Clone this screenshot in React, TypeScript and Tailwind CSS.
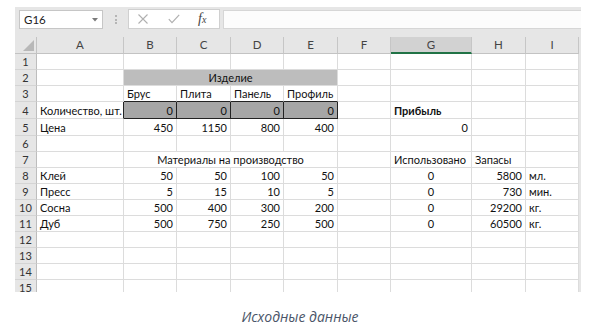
const cols = [
  { key: 'A', w: 'w-[87px]' },
  { key: 'B', w: 'w-[53px]' },
  { key: 'C', w: 'w-[54px]' },
  { key: 'D', w: 'w-[53px]' },
  { key: 'E', w: 'w-[54px]' },
  { key: 'F', w: 'w-[53px]' },
  { key: 'G', w: 'w-[81px]' },
  { key: 'H', w: 'w-[54px]' },
  { key: 'I', w: 'w-[53px]' },
];

type Cell = { text?: string; align?: 'l' | 'r' | 'c'; bold?: boolean; span?: number; cls?: string };

const blank: Cell = {};
const dark = 'bg-[#a6a6a6] border-r-[#222] border-b-[#222]';

// each row: cells A..I (span = merged columns)
const rows: { h: string; cells: Cell[] }[] = [
  { h: 'h-[16px]', cells: Array(9).fill(blank) },
  {
    h: 'h-[16px]',
    cells: [blank, { text: 'Изделие', align: 'c', span: 4, cls: 'bg-[#bdbdbd]' }, blank, blank, blank, blank],
  },
  {
    h: 'h-[16px]',
    cells: [
      blank,
      { text: 'Брус', cls: 'border-b-[#222]' },
      { text: 'Плита', cls: 'border-b-[#222]' },
      { text: 'Панель', cls: 'border-b-[#222]' },
      { text: 'Профиль', cls: 'border-b-[#222]' },
      blank,
      blank,
      blank,
      blank,
    ],
  },
  {
    h: 'h-[17px]',
    cells: [
      { text: 'Количество, шт.', cls: 'border-r-[#222]' },
      { text: '0', align: 'r', cls: dark },
      { text: '0', align: 'r', cls: dark },
      { text: '0', align: 'r', cls: dark },
      { text: '0', align: 'r', cls: dark },
      blank,
      { text: 'Прибыль', bold: true },
      blank,
      blank,
    ],
  },
  {
    h: 'h-[17px]',
    cells: [
      { text: 'Цена' },
      { text: '450', align: 'r' },
      { text: '1150', align: 'r' },
      { text: '800', align: 'r' },
      { text: '400', align: 'r' },
      blank,
      { text: '0', align: 'r' },
      blank,
      blank,
    ],
  },
  { h: 'h-[16px]', cells: Array(9).fill(blank) },
  {
    h: 'h-[16px]',
    cells: [
      blank,
      { text: 'Материалы на производство', align: 'c', span: 4 },
      blank,
      { text: 'Использовано' },
      { text: 'Запасы' },
      blank,
    ],
  },
  ...[
    ['Клей', '50', '50', '100', '50', '5800', 'мл.'],
    ['Пресс', '5', '15', '10', '5', '730', 'мин.'],
    ['Сосна', '500', '400', '300', '200', '29200', 'кг.'],
    ['Дуб', '500', '750', '250', '500', '60500', 'кг.'],
  ].map((r) => ({
    h: 'h-[16px]',
    cells: [
      { text: r[0] },
      { text: r[1], align: 'r' as const },
      { text: r[2], align: 'r' as const },
      { text: r[3], align: 'r' as const },
      { text: r[4], align: 'r' as const },
      blank,
      { text: '0', align: 'c' as const },
      { text: r[5], align: 'r' as const },
      { text: r[6] },
    ],
  })),
  { h: 'h-[16px]', cells: Array(9).fill(blank) },
  { h: 'h-[16px]', cells: Array(9).fill(blank) },
  { h: 'h-[16px]', cells: Array(9).fill(blank) },
  { h: 'h-[16px]', cells: Array(9).fill(blank) },
];

const spanW: Record<number, string> = { 4: 'w-[214px]' };

function SheetRow({ n, h, cells }: { n: number; h: string; cells: Cell[] }) {
  let ci = 0;
  return (
    <div className={`flex ${h}`}>
      <div className="w-[22px] shrink-0 flex items-center justify-center bg-[#e6e6e6] border-r border-b border-r-[#bdbdbd] border-b-[#d4d4d4] text-[#333]">
        {n}
      </div>
      {cells.map((c, i) => {
        const span = c.span ?? 1;
        const w = span > 1 ? spanW[span] : cols[ci].w;
        ci += span;
        const align = c.align === 'r' ? 'justify-end' : c.align === 'c' ? 'justify-center' : 'justify-start';
        return (
          <div
            key={i}
            className={`${w} shrink-0 flex items-center px-[3px] whitespace-nowrap border-r border-b border-[#dcdcdc] ${align} ${c.bold ? 'font-bold' : ''} ${c.cls ?? ''}`}
          >
            {c.text}
          </div>
        );
      })}
    </div>
  );
}

export default function App() {
  return (
    <div className="w-[600px] h-[330px] bg-white overflow-hidden font-['Lato',sans-serif] text-[11px] text-[#111] leading-none">
      <div className="ml-[15px] mt-[7px] w-[566px]">
        {/* formula bar */}
        <div className="h-[30px] bg-[#e6e6e6] flex pt-[3px] items-start">
          <div className="ml-[4px] w-[84px] h-[19px] bg-white border border-[#c6c6c6] flex items-center justify-between px-[4px]">
            <span className="text-[#222] text-[11.5px]">G16</span>
            <svg width="6" height="4" viewBox="0 0 6 4"><path d="M0 0h6L3 3.5z" fill="#7a7a7a" /></svg>
          </div>
          <div className="ml-[12px] mt-[5px] w-[2px] h-[9px] flex flex-col justify-between">
            <span className="w-[2px] h-[2px] bg-[#b5b5b5]" />
            <span className="w-[2px] h-[2px] bg-[#b5b5b5]" />
            <span className="w-[2px] h-[2px] bg-[#b5b5b5]" />
          </div>
          <div className="ml-[11px] w-[92px] h-[20px] -mt-[1px] bg-white border border-[#d0d0d0] flex items-center">
            <svg className="ml-[9px]" width="10" height="10" viewBox="0 0 10 10">
              <path d="M0.5 0.5l9 9M9.5 0.5l-9 9" stroke="#b0b0b0" strokeWidth="1.1" />
            </svg>
            <svg className="ml-[20px]" width="12" height="10" viewBox="0 0 12 10">
              <path d="M0.8 5.2l3.2 3.5L11.2 0.8" stroke="#b0b0b0" strokeWidth="1.2" fill="none" />
            </svg>
            <span className="ml-[18px] font-['Liberation_Serif',serif] italic text-[14px] text-[#444]">
              f<span className="text-[10px]">x</span>
            </span>
          </div>
          <div className="ml-[3px] flex-1 h-[19px] bg-[#fcfcfc] border border-[#d6d6d6] border-r-0" />
        </div>

        <div className="flex">
          <div className="w-[564px]">
            {/* column header */}
            <div className="flex h-[17px] bg-[#e6e6e6] text-[#444] text-[11.5px]">
              <div className="w-[22px] relative border-r border-b border-[#c3c3c3]">
                <svg className="absolute right-[2px] bottom-[2px]" width="11" height="11" viewBox="0 0 11 11">
                  <path d="M11 0V11H0z" fill="#b8b8b8" />
                </svg>
              </div>
              {cols.map((c) => (
                <div
                  key={c.key}
                  className={`${c.w} flex items-center justify-center border-r border-[#c6c6c6] ${
                    c.key === 'G' ? 'bg-[#d2d2d2] border-b-2 border-b-[#217346]' : 'border-b border-b-[#c3c3c3]'
                  }`}
                >
                  {c.key}
                </div>
              ))}
            </div>
            <div className="h-[238px] overflow-hidden">
              {rows.map((r, i) => (
                <SheetRow key={i} n={i + 1} h={r.h} cells={r.cells} />
              ))}
            </div>
          </div>
          <div className="w-[2px] bg-[#e6e6e6]" />
        </div>
      </div>
      <p className="mt-[18px] text-center font-['Open_Sans',sans-serif] italic text-[14px] text-[#4a5568]">
        Исходные данные
      </p>
    </div>
  );
}
